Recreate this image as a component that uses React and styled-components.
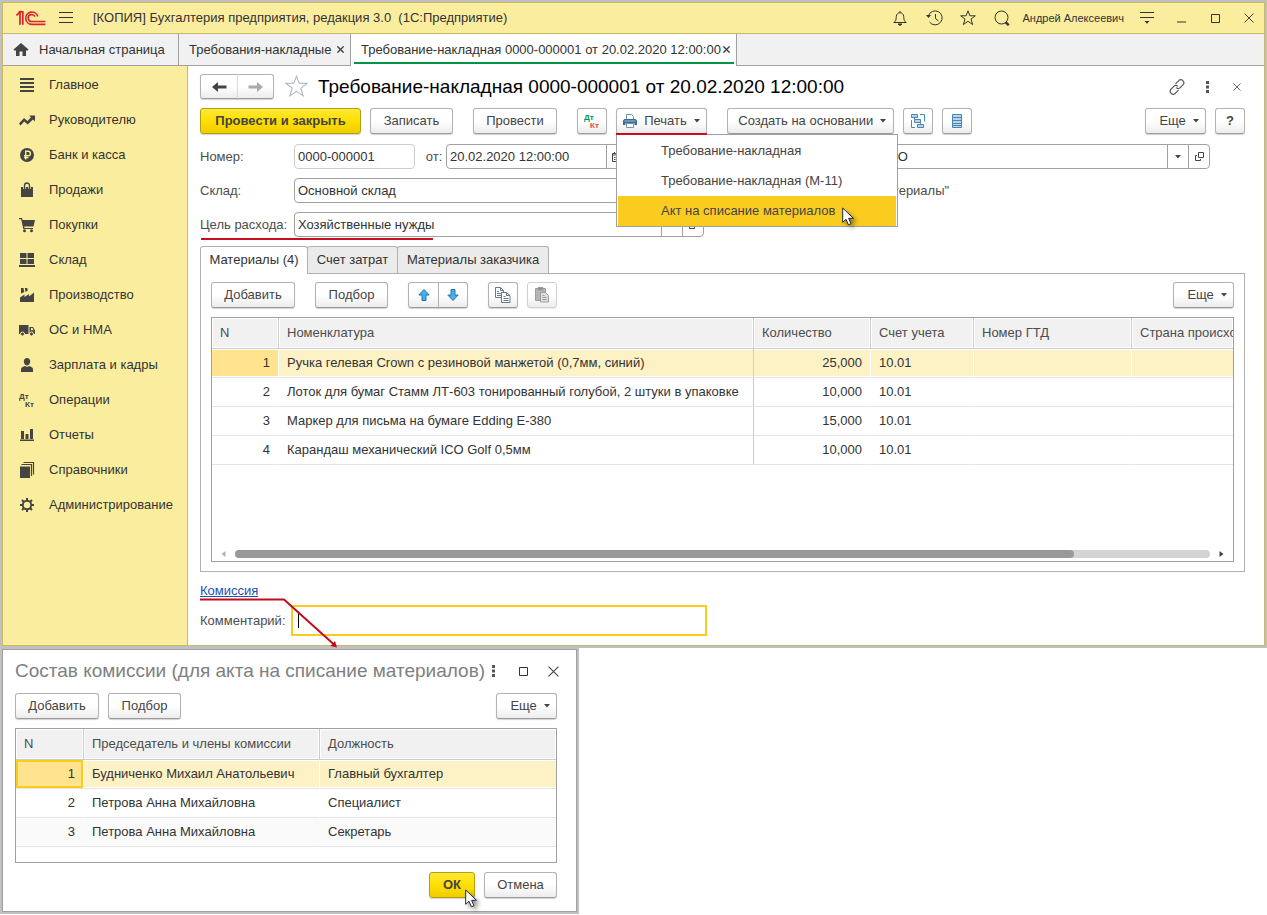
import React from 'react'
import styled, { createGlobalStyle, css } from 'styled-components'

const GlobalStyle = createGlobalStyle`
*, *::before, *::after {
  box-sizing: border-box;
}
body {
  margin: 0;
  background: #ffffff;
  color: #333333;
  font-family: 'Liberation Sans', Arial, sans-serif;
  font-size: 13px;
  line-height: 16px;
}
button, input {
  font: inherit;
  color: inherit;
}
svg {
  display: block;
  flex: none;
}
`

/* ---------- window ---------- */

const Frame = styled.div`
  position: relative;
  padding: 2px;
  background: #c0c0c0;
`
const MainWindow = styled.div`
  border: 1px solid #c9b867;
  background: #ffffff;
`
const TopBar = styled.header`
  display: flex;
  align-items: center;
  height: 31px;
  padding: 0 7px 0 13px;
  background: #fbed9e;
  border-bottom: 1px solid #c9b867;
`
const AppTitle = styled.h1`
  flex: 1;
  margin: 0 0 0 7px;
  font-size: 13px;
  font-weight: 400;
  white-space: pre;
`
const TopIcons = styled.div`
  display: flex;
  align-items: center;
  gap: 18px;
`
const UserName = styled.span`
  margin-left: 12px;
  margin-right: 15px;
  font-size: 11px;
`
const IconButton = styled.button`
  display: flex;
  align-items: center;
  justify-content: center;
  width: ${(p) => p.$w || 16}px;
  height: 20px;
  margin: 0;
  padding: 0;
  border: 0;
  background: none;
  color: #333333;
`

/* ---------- open pages ---------- */

const PageTabs = styled.nav`
  display: flex;
  height: 32px;
  background: #f1f1f1;
  border-bottom: 1px solid #a0a0a0;
`
const PageTab = styled.div`
  position: relative;
  display: flex;
  align-items: center;
  justify-content: space-between;
  width: ${(p) => p.$w}px;
  height: ${(p) => (p.$active ? 32 : 31)}px;
  padding: 0 6px 0 10px;
  border-right: 1px solid #a0a0a0;
  background: ${(p) => (p.$active ? '#ffffff' : 'transparent')};
  white-space: nowrap;

  ${(p) =>
    p.$active &&
    css`
      padding-bottom: 1px;
      &::after {
        content: '';
        position: absolute;
        left: 3px;
        right: 2px;
        bottom: 2px;
        height: 2px;
        background: #009646;
      }
    `}
`
const PageLink = styled.a`
  display: flex;
  align-items: center;
  gap: 10px;
  color: inherit;
  text-decoration: none;
`

/* ---------- sections ---------- */

const Body = styled.div`
  display: flex;
`
const Sidebar = styled.nav`
  flex: none;
  width: 185px;
  padding: 1px 0 8px;
  background: #fbed9e;
  border-right: 1px solid #c9b867;
`
const SectionLink = styled.a`
  display: flex;
  align-items: center;
  gap: 14px;
  height: 35px;
  padding-left: 16px;
  color: #333333;
  text-decoration: none;
`

/* ---------- document form ---------- */

const Content = styled.main`
  flex: 1;
  min-width: 0;
  padding: 8px 19px 9px 12px;
`
const TitleRow = styled.div`
  display: flex;
  align-items: center;
  height: 25px;
`
const DocTitle = styled.h2`
  flex: 1;
  margin: 0;
  color: #000000;
  font-size: 19px;
  line-height: 24px;
  font-weight: 400;
`
const TitleIcons = styled.div`
  display: flex;
  align-items: center;
  gap: 14px;
`
const Button = styled.button`
  display: flex;
  align-items: center;
  justify-content: center;
  gap: 7px;
  width: ${(p) => p.$w || 30}px;
  height: 26px;
  margin: 0;
  padding: 0;
  border: 1px solid #b3b3b3;
  border-bottom-color: #9c9c9c;
  border-radius: 3px;
  background: linear-gradient(#ffffff 50%, #ececec);
  box-shadow: 0 1px 1px rgba(0, 0, 0, 0.18);
  color: #444444;
  white-space: nowrap;

  &:disabled {
    border-color: #d0d0d0;
    box-shadow: 0 1px 1px rgba(0, 0, 0, 0.08);
  }

  ${(p) =>
    p.$primary &&
    css`
      border-color: #b39f12;
      background: linear-gradient(#ffe838, #ffdf00 50%, #efcd00);
      color: #444444;
      font-weight: 700;
    `}
`
const ButtonPair = styled.div`
  display: flex;

  ${Button} {
    height: ${(p) => p.$h || 26}px;
  }
  ${Button}:first-child {
    border-top-right-radius: 0;
    border-bottom-right-radius: 0;
  }
  ${Button}:last-child {
    margin-left: -1px;
    border-left-color: ${(p) => p.$divider || '#b3b3b3'};
    border-top-left-radius: 0;
    border-bottom-left-radius: 0;
  }
`
const Commands = styled.div`
  display: flex;
  gap: 20px;
  margin-top: ${(p) => p.$top || 0}px;
`
const Group = styled.div`
  display: flex;
  gap: 9px;
  margin-left: ${(p) => (p.$end ? 'auto' : 0)};
`
const MenuAnchor = styled.div`
  position: relative;
`
const MenuList = styled.div`
  position: absolute;
  z-index: 2;
  top: 26px;
  left: 0;
  width: 282px;
  padding: 1px 1px 0;
  border: 1px solid #a0a0a0;
  background: #ffffff;
`
const MenuItem = styled.button`
  display: block;
  width: 100%;
  height: 30px;
  padding: 0 0 0 43px;
  border: 0;
  background: ${(p) => (p.$active ? '#facc20' : '#ffffff')};
  color: #444444;
  text-align: left;
`
const RedLine = styled.span`
  position: absolute;
  z-index: 3;
  left: ${(p) => p.$left || 0}px;
  bottom: ${(p) => p.$bottom}px;
  width: ${(p) => p.$w}px;
  height: 2px;
  background: #c8101c;
`
const Cursor = styled.svg`
  position: absolute;
  z-index: 4;
  left: ${(p) => p.$left}px;
  top: ${(p) => p.$top}px;
  filter: drop-shadow(3px 3px 2px rgba(0, 0, 0, 0.4));
`

const Fields = styled.div`
  display: grid;
  grid-template-columns: 504px 1fr;
  column-gap: 14px;
  row-gap: 9px;
  margin: 10px 35px 0 0;
`
const Field = styled.div`
  position: relative;
  display: flex;
  align-items: center;
  height: 25px;
`
const Label = styled.label`
  flex: none;
  width: ${(p) => (p.$w ? `${p.$w}px` : 'auto')};
  color: #4d4d4d;
  white-space: nowrap;
`
const InputBox = styled.div`
  display: flex;
  flex: ${(p) => (p.$w ? 'none' : 1)};
  width: ${(p) => (p.$w ? `${p.$w}px` : 'auto')};
  min-width: 0;
  height: 25px;
  border: 1px solid ${(p) => (p.$soft ? '#cccccc' : '#a0a0a0')};
  border-radius: 4px;
  background: #ffffff;
`
const Input = styled.input`
  flex: 1;
  width: 0;
  min-width: 0;
  padding: 0 3px;
  border: 0;
  outline: 0;
  background: none;
`
const InputButton = styled.button`
  display: flex;
  align-items: center;
  justify-content: center;
  width: 21px;
  padding: 0;
  border: 0;
  border-left: 1px solid #a0a0a0;
  background: none;
  color: #444444;
`
const Note = styled.span`
  color: #4d4d4d;
  white-space: nowrap;
`

/* ---------- tabular part ---------- */

const FormTabs = styled.div`
  display: flex;
  margin-top: 9px;
`
const FormTab = styled.button`
  width: ${(p) => p.$w}px;
  height: 27px;
  margin-right: -1px;
  padding: 0;
  border: 1px solid #b0b0b0;
  border-bottom: 0;
  border-radius: 3px 3px 0 0;
  background: #ebebeb;

  ${(p) =>
    p.$active &&
    css`
      z-index: 1;
      height: 28px;
      margin-bottom: -1px;
      padding-bottom: 1px;
      background: #ffffff;
    `}
`
const Panel = styled.section`
  padding: 8px 10px 9px;
  border: 1px solid #b0b0b0;
`
const TableBox = styled.div`
  display: flex;
  flex-direction: column;
  justify-content: space-between;
  min-height: ${(p) => p.$h}px;
  margin-top: 9px;
  border: 1px solid #a0a0a0;
  overflow: hidden;
`
const Table = styled.table`
  width: 100%;
  table-layout: fixed;
  border-spacing: 0;
`
const Th = styled.th`
  height: 31px;
  padding: 0 0 0 8px;
  border-right: 1px solid #cccccc;
  border-bottom: 1px solid #cccccc;
  background: #f1f1f1;
  box-shadow: inset 0 0 0 1px #ffffff;
  color: #4d4d4d;
  font-weight: 400;
  text-align: left;
  white-space: nowrap;
  overflow: hidden;

  &:last-child {
    border-right: 0;
  }
`
const Td = styled.td`
  height: 29px;
  padding: 0 8px;
  border-right: 1px solid ${(p) => (p.$line ? '#cccccc' : 'transparent')};
  border-bottom: 1px solid #e4e4e4;
  text-align: ${(p) => (p.$num ? 'right' : 'left')};
  white-space: nowrap;
  background-clip: padding-box;

  &:last-child {
    border-right: 0;
  }
`
const Row = styled.tr`
  ${(p) =>
    p.$even &&
    css`
      background: #fafafa;
    `}
  ${(p) =>
    p.$selected &&
    css`
      ${Td} {
        background-color: #fdf1c6;
        box-shadow: inset 0 1px 0 #ffffff, inset 0 -1px 0 #ffffff;
      }
      ${Td}:first-child {
        background-color: #ffe38d;
        ${p.$focus && 'box-shadow: inset 0 0 0 2px #facc20;'}
      }
    `}
`
const ScrollRow = styled.div`
  display: flex;
  align-items: center;
  gap: 9px;
  height: 14px;
  padding: 0 9px;
`
const ScrollTrack = styled.div`
  flex: 1;
  height: 8px;
  border-radius: 4px;
  background: #d4d4d4;
`
const ScrollThumb = styled.div`
  width: 86%;
  height: 8px;
  border-radius: 4px;
  background: #999999;
`

/* ---------- footer of the form ---------- */

const Footer = styled.div`
  position: relative;
  padding-top: 11px;
`
const CommissionLink = styled.a`
  display: block;
  width: fit-content;
  color: #1a50b8;
`
const CommentRow = styled.div`
  display: flex;
  align-items: center;
  margin-top: 6px;
`
const CommentBox = styled.div`
  position: relative;
  flex: 0 1 416px;

  /* text caret */
  &::after {
    content: '';
    position: absolute;
    left: 7px;
    top: 8px;
    width: 1px;
    height: 15px;
    background: #000000;
  }
`
const CommentInput = styled.input`
  display: block;
  width: 100%;
  height: 31px;
  padding: 0 5px;
  border: 2px solid #facc20;
  outline: 0;
  caret-color: transparent;
`
const Arrow = styled.svg`
  position: absolute;
  z-index: 3;
  left: 0;
  top: 26px;
  pointer-events: none;
`

/* ---------- commission dialog ---------- */

const DialogFrame = styled(Frame)`
  width: 579px;
  padding: 1px 2px 2px;
`
const Dialog = styled.section`
  padding: 8px 19px 13px 12px;
  border: 1px solid #a0a0a0;
  background: #ffffff;
`
const DialogHead = styled.div`
  display: flex;
  align-items: center;
  height: 26px;
`
const DialogTitle = styled.h2`
  flex: 1;
  margin: 0;
  color: #808080;
  font-size: 19px;
  line-height: 24px;
  font-weight: 400;
  white-space: nowrap;
`
const DialogActions = styled.div`
  display: flex;
  justify-content: flex-end;
  gap: 9px;
  margin-top: 9px;
`

/* ---------- icons ---------- */

const Logo = () => (
  <svg width="30" height="16" viewBox="0 0 30 16" fill="none" stroke="#d8232a" strokeWidth="1.6">
    <path d="M0.4 5.4 4 2.2v12.6M2.6 1.9h4.2v12.9" strokeWidth="1.7" />
    <path d="M21.8 6.4A6.2 6.2 0 1 0 15.8 14.4H29.4" />
    <path d="M18.9 6.6A3.5 3.5 0 1 0 15.8 11.5H29.4" />
  </svg>
)

const Burger = () => (
  <svg width="14" height="12" viewBox="0 0 14 12" fill="#333">
    <path d="M0 0h14v1H0zM0 5h14v1H0zM0 10h14v1H0z" />
  </svg>
)

const Bell = () => (
  <svg width="16" height="16" viewBox="0 0 16 16" fill="none" stroke="#333">
    <path d="M1.5 12.5h13M2.5 12C4.5 10.5 4 8 4.3 6.2 4.7 4 6 2.7 8 2.7S11.3 4 11.7 6.2C12 8 11.5 10.5 13.5 12M8 1v1.5" />
    <path d="M6 14h4l-2 1.500z" fill="#333" />
  </svg>
)

const HistoryIcon = () => (
  <svg width="17" height="16" viewBox="0 0 17 16" fill="none" stroke="#333">
    <path d="M2.4 6A7 7 0 1 1 3.5 12M9.5 4v4.5l3 2.500" />
    <path d="M0 5h5L2.500 8z" fill="#333" stroke="none" />
  </svg>
)

const StarIcon = ({ size = 16, color = '#333', width = 1 }) => (
  <svg width={size} height={size} viewBox="0 0 16 16" fill="none" stroke={color} strokeWidth={width}>
    <path d="M8 .8l1.9 5h5.4l-4.3 3.3 1.6 5.4L8 11.300l-4.600 3.200L5 9.100.7 5.800h5.400z" />
  </svg>
)

const SearchIcon = () => (
  <svg width="16" height="16" viewBox="0 0 16 16" fill="none" stroke="#333">
    <circle cx="7.5" cy="7.5" r="6.5" />
    <path d="M11.5 12.2l3.3 3" strokeWidth="2.4" />
  </svg>
)

const SettingsLines = () => (
  <svg width="14" height="12" viewBox="0 0 14 12" fill="#333">
    <path d="M0 0h14v1H0zM0 5h14v1H0zM4.5 9h5L7 11.8z" />
  </svg>
)

const MinIcon = () => (
  <svg width="9" height="10" viewBox="0 0 9 10" fill="#333">
    <path d="M0 8.5h9v1H0z" />
  </svg>
)

const MaxIcon = () => (
  <svg width="9" height="9" viewBox="0 0 9 9" fill="none" stroke="#333">
    <path d="M.5.5h8v8h-8z" />
  </svg>
)

const CloseIcon = ({ size = 10, width = 1 }) => (
  <svg width={size} height={size} viewBox="0 0 10 10" fill="none" stroke="#444" strokeWidth={width}>
    <path d="M.5.5l9 9M9.5.5l-9 9" />
  </svg>
)

const HomeIcon = () => (
  <svg width="16" height="13" viewBox="0 0 16 13" fill="#444">
    <path d="M8 0l7.5 6.5-.8.9H13V13H9.5V8.5h-3V13H3V7.400H1.300L.5 6.500z" />
  </svg>
)

const ChainIcon = () => (
  <svg width="16" height="16" viewBox="0 0 16 16" fill="none" stroke="#555" strokeWidth="1.2">
    <path d="M6.5 4.8l3-3a2.7 2.7 0 0 1 4.5 0 3 3 0 0 1 .2 3.900l-3 3a2.800 2.800 0 0 1-4 0M9.500 11.200l-3 3a2.700 2.700 0 0 1-4.500 0 3 3 0 0 1-.2-3.900l3-3a2.800 2.800 0 0 1 4 0" />
  </svg>
)

const DotsIcon = () => (
  <svg width="3" height="12" viewBox="0 0 3 12" fill="#555">
    <path d="M0 0h3v3H0zM0 4.500h3v3H0zM0 9h3v3H0z" />
  </svg>
)

const ArrowIcon = ({ back }) => (
  <svg width="15" height="12" viewBox="0 0 15 12" fill={back ? '#444' : '#aaa'}>
    <path d={back ? 'M0 6l6-5v3.500h8.500v3H6V11z' : 'M15 6L9 1v3.500H.5v3H9V11z'} />
  </svg>
)

const MoveIcon = ({ down }) => (
  <svg width="12" height="12" viewBox="0 0 12 12" fill="#3fb0f0" stroke="#2a72a8">
    <path d={down ? 'M6 11.500L.8 6H4V.5h4V6h3.200z' : 'M6 .5L.8 6H4v5.500h4V6h3.200z'} />
  </svg>
)

const Caret = () => (
  <svg width="6" height="4" viewBox="0 0 6 4" fill="#444">
    <path d="M0 0h6L3 3.500z" />
  </svg>
)

const OpenIcon = () => (
  <svg width="9" height="9" viewBox="0 0 9 9" fill="none" stroke="#444">
    <path d="M3.500.5h5v5h-5zM2 3.500H.5v5h5V7" />
  </svg>
)

const CalendarIcon = () => (
  <svg width="10" height="10" viewBox="0 0 10 10" fill="none" stroke="#444">
    <path d="M.5 1.500h9v8h-9zM.5 3h9M2.500 0v2M7.500 0v2M2 5.500h1.500M2 7.500h1.500M5 5.500h1.500" />
  </svg>
)

const DtKt = ({ dt = '#444', kt = '#444' }) => (
  <svg width="16" height="16" viewBox="0 0 16 16" fontFamily="Liberation Sans" fontWeight="700" fontSize="8">
    <text x="0" y="7" fill={dt}>Дт</text>
    <text x="6" y="15" fill={kt}>Кт</text>
  </svg>
)

const PrinterIcon = () => (
  <svg width="14" height="14" viewBox="0 0 14 14">
    <path d="M3.500 6V.5h5l2 2V6" fill="#fff" stroke="#7a8fa3" />
    <path d="M1.500 5h11L14 6.500V11h-2.500V9h-9v2H0V6.500z" fill="#386b9c" />
    <path d="M1.500 7h11" stroke="#9cc0e0" />
    <path d="M3.500 9.500h7v4h-7z" fill="#fff" stroke="#7a8fa3" />
  </svg>
)

const StructureIcon = () => (
  <svg width="16" height="16" viewBox="0 0 16 16" fill="none" stroke="#4b86b4">
    <path d="M1.500 1.500h6v3h-6zM4.500 6.500h6v3h-6zM7.500 11.500h6v3h-6z" fill="#b9d3e8" />
    <path d="M10 1.500h4.500v7M1.500 7v7.500H5M4.500 4.500v2M10.500 9.500v2" />
  </svg>
)

const RegisterIcon = () => (
  <svg width="10" height="14" viewBox="0 0 10 14" fill="#b9d3e8" stroke="#4b86b4">
    <path d="M.5.5h9v13h-9zM.5 3.500h9M.5 6.500h9M.5 9.500h9M.5 11.500h9" />
  </svg>
)

const CopyIcon = () => (
  <svg width="16" height="16" viewBox="0 0 16 16" fill="#fff" stroke="#66788c">
    <path d="M.5.5h5l3 3v7h-8zM5.500.5v3h3M2 4.500h2M2 6.500h4M2 8.500h4" />
    <path d="M6.500 5.500h5l3.500 3v7H6.500zM11.500 5.500v3H15M8.500 9.500h2M8.500 11.500h5M8.500 13.500h5" />
  </svg>
)

const PasteIcon = () => (
  <svg width="16" height="16" viewBox="0 0 16 16" fill="#b5b5b5" stroke="#9d9d9d">
    <path d="M1.500 1.500h10v12h-10z" />
    <path d="M4 .5h5v2.500H4z" fill="#8f8f8f" />
    <path d="M6.500 5.500h5l3 3v6.500h-8zM8.500 8.500h2M8.500 10.500h4M8.500 12.500h4" fill="#dedede" />
  </svg>
)

const Pointer = ({ left, top }) => (
  <Cursor $left={left} $top={top} width="13" height="19" viewBox="0 0 13 19" fill="#fff" stroke="#1c2833">
    <path d="M.7 1v14.300l3.300-3 2.400 5.500 2.600-1.100-2.400-5.400h4.800z" />
  </Cursor>
)

const sectionIcons = {
  main: <path d="M1 1h14v2H1zM1 5h14v2H1zM1 9h14v2H1zM1 13h14v2H1z" />,
  chart: <path d="M0 11.500l5-5.500 3.500 3L12 5.300 10 3.500h6v6l-2-2-5.300 5L5.200 9.500 1.500 13.500z" />,
  ruble: (
    <>
      <circle cx="8" cy="8" r="7" />
      <path d="M6.700 12.500V4.200h2.500a2.200 2.200 0 0 1 0 4.400H5M5 10.500h4.500" fill="none" stroke="#fbed9e" strokeWidth="1.4" />
    </>
  ),
  bag: (
    <>
      <path d="M2 5h12v10H2z" />
      <path d="M5.500 7V3.500a2.500 2.500 0 0 1 5 0V7" fill="none" stroke="#fbed9e" strokeWidth="2.6" />
      <path d="M5.500 7V3.500a2.500 2.500 0 0 1 5 0V7" fill="none" stroke="#444" strokeWidth="1.3" />
    </>
  ),
  cart: (
    <>
      <path d="M0 1h3l.7 2H16l-1.500 6.500H5.200l.3 1.500H14v1H4.300L2.200 2.300H0z" />
      <circle cx="5.5" cy="13.7" r="1.5" />
      <circle cx="12.5" cy="13.7" r="1.5" />
    </>
  ),
  stock: <path d="M1 1h6.500v5H1zM8.500 1H15v5H8.500zM1 7h6.500v5H1zM8.500 7H15v5H8.500zM0 13h16v2H0z" />,
  factory: <path d="M1 15V10.500L5.500 7.500v2.500l4.500-3v2.500l5-4V15zM2 1h2.500l.8 4L2 6.500zM5.800 1h2.500l.5 2.500L6.500 5z" />,
  truck: (
    <>
      <path d="M0 3h9.500v9H0zM10.500 5H14l2 3.500V12h-5.500z" />
      <circle cx="3.5" cy="12" r="2" stroke="#fbed9e" />
      <circle cx="12.5" cy="12" r="2" stroke="#fbed9e" />
      <path d="M12 6h1.500l1 2.200H12z" fill="#fbed9e" />
    </>
  ),
  person: <path d="M8 1a3.200 3.200 0 0 1 3.200 3.500C11 7 9.500 8.500 8 8.500S5 7 4.800 4.500A3.200 3.200 0 0 1 8 1zM2 15v-3c0-1.500 2-2.500 4-3l2 1 2-1c2 .5 4 1.500 4 3v3z" />,
  report: <path d="M2 4h3v8H2zM6.500 7h3v5h-3zM11 2h3v10h-3zM1 12.500h14v1.500H1z" />,
  books: (
    <>
      <path d="M1 4.500h10V16H1z" />
      <path d="M2.500 2.500h10V14M4.500.5h10V12.500" fill="none" stroke="#444" strokeWidth="1.2" />
    </>
  ),
  gear: (
    <>
      <circle cx="8" cy="8" r="4.2" fill="none" stroke="#444" strokeWidth="1.9" />
      <path
        d="M8 1v3M8 12v3M1 8h3M12 8h3M3 3l2.200 2.200M10.800 10.800L13 13M13 3l-2.200 2.200M5.200 10.800L3 13"
        stroke="#444"
        strokeWidth="2"
      />
    </>
  )
}

/* ---------- data ---------- */

const sections = [
  ['main', 'Главное'],
  ['chart', 'Руководителю'],
  ['ruble', 'Банк и касса'],
  ['bag', 'Продажи'],
  ['cart', 'Покупки'],
  ['stock', 'Склад'],
  ['factory', 'Производство'],
  ['truck', 'ОС и НМА'],
  ['person', 'Зарплата и кадры'],
  ['dtkt', 'Операции'],
  ['report', 'Отчеты'],
  ['books', 'Справочники'],
  ['gear', 'Администрирование']
]

const materials = [
  ['Ручка гелевая Crown с резиновой манжетой (0,7мм, синий)', '25,000'],
  ['Лоток для бумаг Стамм ЛТ-603 тонированный голубой, 2 штуки в упаковке', '10,000'],
  ['Маркер для письма на бумаге Edding E-380', '15,000'],
  ['Карандаш механический ICO Golf 0,5мм', '10,000']
]

const members = [
  ['Будниченко Михаил Анатольевич', 'Главный бухгалтер'],
  ['Петрова Анна Михайловна', 'Специалист'],
  ['Петрова Анна Михайловна', 'Секретарь']
]

const MoreButton = () => (
  <Button $w={61}>
    &nbsp;&nbsp;Еще <Caret />
  </Button>
)

const MaterialsTable = () => (
  <TableBox $h={245}>
    <Table>
      <colgroup>
        <col style={{ width: 67 }} />
        <col />
        <col style={{ width: 117 }} />
        <col style={{ width: 103 }} />
        <col style={{ width: 158 }} />
        <col style={{ width: 101 }} />
      </colgroup>
      <thead>
        <tr>
          <Th>N</Th>
          <Th>Номенклатура</Th>
          <Th>Количество</Th>
          <Th>Счет учета</Th>
          <Th>Номер ГТД</Th>
          <Th>Страна происхождения</Th>
        </tr>
      </thead>
      <tbody>
        {materials.map(([name, count], i) => (
          <Row key={name} $selected={i === 0}>
            <Td $num>{i + 1}</Td>
            <Td $line>{name}</Td>
            <Td $num>{count}</Td>
            <Td>10.01</Td>
            <Td />
            <Td />
          </Row>
        ))}
      </tbody>
    </Table>
    <ScrollRow>
      <svg width="5" height="6" viewBox="0 0 5 6" fill="#b0b0b0">
        <path d="M4.500 0v6L.5 3z" />
      </svg>
      <ScrollTrack>
        <ScrollThumb />
      </ScrollTrack>
      <svg width="5" height="6" viewBox="0 0 5 6" fill="#444">
        <path d="M.5 0v6l4-3z" />
      </svg>
    </ScrollRow>
  </TableBox>
)

const CommissionDialog = () => (
  <DialogFrame>
    <Dialog aria-label="Состав комиссии">
      <DialogHead>
        <DialogTitle>Состав комиссии (для акта на списание материалов)</DialogTitle>
        <TitleIcons>
          <IconButton aria-label="Меню"><DotsIcon /></IconButton>
          <IconButton aria-label="Развернуть"><MaxIcon /></IconButton>
          <IconButton aria-label="Закрыть"><CloseIcon size={11} /></IconButton>
        </TitleIcons>
      </DialogHead>
      <Commands $top={9}>
        <Group>
          <Button $w={84}>Добавить</Button>
          <Button $w={73}>Подбор</Button>
        </Group>
        <Group $end>
          <MoreButton />
        </Group>
      </Commands>
      <TableBox $h={135}>
        <Table>
          <colgroup>
            <col style={{ width: 68 }} />
            <col style={{ width: 236 }} />
            <col />
          </colgroup>
          <thead>
            <tr>
              <Th>N</Th>
              <Th>Председатель и члены комиссии</Th>
              <Th>Должность</Th>
            </tr>
          </thead>
          <tbody>
            {members.map(([name, post], i) => (
              <Row key={i} $selected={i === 0} $focus $even={i === 2}>
                <Td $num>{i + 1}</Td>
                <Td>{name}</Td>
                <Td>{post}</Td>
              </Row>
            ))}
          </tbody>
        </Table>
      </TableBox>
      <DialogActions>
        <MenuAnchor>
          <Button $w={46} $primary>ОК</Button>
          <Pointer left={36} top={17} />
        </MenuAnchor>
        <Button $w={73}>Отмена</Button>
      </DialogActions>
    </Dialog>
  </DialogFrame>
)

const App = () => {
  return (
    <>
      <GlobalStyle />
      <Frame>
        <MainWindow>
          <TopBar>
            <Logo />
            <IconButton $w={40} aria-label="Главное меню"><Burger /></IconButton>
            <AppTitle>{'[КОПИЯ] Бухгалтерия предприятия, редакция 3.0  (1С:Предприятие)'}</AppTitle>
            <TopIcons>
              <IconButton aria-label="Оповещения"><Bell /></IconButton>
              <IconButton aria-label="История"><HistoryIcon /></IconButton>
              <IconButton aria-label="Избранное"><StarIcon /></IconButton>
              <IconButton aria-label="Поиск"><SearchIcon /></IconButton>
            </TopIcons>
            <UserName>Андрей Алексеевич</UserName>
            <TopIcons>
              <IconButton aria-label="Настройки"><SettingsLines /></IconButton>
              <IconButton aria-label="Свернуть"><MinIcon /></IconButton>
              <IconButton aria-label="Развернуть"><MaxIcon /></IconButton>
              <IconButton aria-label="Закрыть"><CloseIcon /></IconButton>
            </TopIcons>
          </TopBar>

          <PageTabs>
            <PageTab $w={176}>
              <PageLink href="#home"><HomeIcon />Начальная страница</PageLink>
            </PageTab>
            <PageTab $w={172}>
              <PageLink href="#list">Требования-накладные</PageLink>
              <IconButton $w={8} aria-label="Закрыть"><CloseIcon size={7} width={2} /></IconButton>
            </PageTab>
            <PageTab $w={386} $active>
              <PageLink href="#doc">Требование-накладная 0000-000001 от 20.02.2020 12:00:00</PageLink>
              <IconButton $w={8} aria-label="Закрыть"><CloseIcon size={7} width={2} /></IconButton>
            </PageTab>
          </PageTabs>

          <Body>
            <Sidebar>
              {sections.map(([icon, title]) => (
                <SectionLink key={icon} href={`#${icon}`}>
                  {icon === 'dtkt' ? (
                    <DtKt />
                  ) : (
                    <svg width="16" height="16" viewBox="0 0 16 16" fill="#444">
                      {sectionIcons[icon]}
                    </svg>
                  )}
                  {title}
                </SectionLink>
              ))}
            </Sidebar>

            <Content>
              <TitleRow>
                <ButtonPair $h={25} $divider="#dddddd">
                  <Button $w={38} aria-label="Назад"><ArrowIcon back /></Button>
                  <Button $w={37} aria-label="Вперед"><ArrowIcon /></Button>
                </ButtonPair>
                <IconButton $w={44} aria-label="В избранное">
                  <StarIcon size={23} color="#a8b0b8" width={0.7} />
                </IconButton>
                <DocTitle>Требование-накладная 0000-000001 от 20.02.2020 12:00:00</DocTitle>
                <TitleIcons>
                  <IconButton aria-label="Ссылка"><ChainIcon /></IconButton>
                  <IconButton aria-label="Меню"><DotsIcon /></IconButton>
                  <IconButton aria-label="Закрыть"><CloseIcon size={8} /></IconButton>
                </TitleIcons>
              </TitleRow>

              <Commands $top={9}>
                <Group>
                  <Button $w={161} $primary>Провести и закрыть</Button>
                  <Button $w={83}>Записать</Button>
                </Group>
                <Group>
                  <Button $w={84}>Провести</Button>
                </Group>
                <Group>
                  <Button aria-label="Движения документа"><DtKt dt="#009646" kt="#e04848" /></Button>
                  <MenuAnchor>
                    <Button $w={91}><PrinterIcon />Печать <Caret /></Button>
                    <RedLine $w={91} $bottom={-1} />
                    <MenuList>
                      <MenuItem>Требование-накладная</MenuItem>
                      <MenuItem>Требование-накладная (М-11)</MenuItem>
                      <MenuItem $active>Акт на списание материалов</MenuItem>
                    </MenuList>
                    <Pointer left={226} top={99} />
                  </MenuAnchor>
                </Group>
                <Group>
                  <Button $w={167}>&nbsp;Создать на основании <Caret /></Button>
                  <Button aria-label="Структура подчиненности"><StructureIcon /></Button>
                  <Button aria-label="Реестр"><RegisterIcon /></Button>
                </Group>
                <Group $end>
                  <MoreButton />
                  <Button aria-label="Справка"><b>?</b></Button>
                </Group>
              </Commands>

              <Fields>
                <Field>
                  <Label $w={94} htmlFor="number">Номер:</Label>
                  <InputBox $w={121} $soft><Input id="number" defaultValue="0000-000001" /></InputBox>
                  <Label $w={31} htmlFor="date">&nbsp;&nbsp;&nbsp;от:</Label>
                  <InputBox $w={182}>
                    <Input id="date" defaultValue="20.02.2020 12:00:00" />
                    <InputButton aria-label="Календарь"><CalendarIcon /></InputButton>
                  </InputBox>
                </Field>
                <Field>
                  <Label $w={76} htmlFor="org">Орг.:</Label>
                  <InputBox>
                    <Input id="org" defaultValue="Конфетпром ООО" />
                    <InputButton aria-label="Выбрать"><Caret /></InputButton>
                    <InputButton aria-label="Открыть"><OpenIcon /></InputButton>
                  </InputBox>
                </Field>
                <Field>
                  <Label $w={94} htmlFor="store">Склад:</Label>
                  <InputBox>
                    <Input id="store" defaultValue="Основной склад" />
                    <InputButton aria-label="Выбрать"><Caret /></InputButton>
                    <InputButton aria-label="Открыть"><OpenIcon /></InputButton>
                  </InputBox>
                </Field>
                <Field>
                  <Note>Счета учета на закладке "Материалы"</Note>
                </Field>
                <Field>
                  <Label $w={94} htmlFor="purpose">Цель расхода:</Label>
                  <InputBox>
                    <Input id="purpose" defaultValue="Хозяйственные нужды" />
                    <InputButton aria-label="Выбрать"><Caret /></InputButton>
                    <InputButton aria-label="Открыть"><OpenIcon /></InputButton>
                  </InputBox>
                  <RedLine $left={1} $w={232} $bottom={-3} />
                </Field>
              </Fields>

              <FormTabs>
                <FormTab $w={108} $active>Материалы (4)</FormTab>
                <FormTab $w={91}>Счет затрат</FormTab>
                <FormTab $w={152}>Материалы заказчика</FormTab>
              </FormTabs>
              <Panel>
                <Commands>
                  <Button $w={84}>Добавить</Button>
                  <Button $w={73}>Подбор</Button>
                  <ButtonPair>
                    <Button $w={31} aria-label="Вверх"><MoveIcon /></Button>
                    <Button aria-label="Вниз"><MoveIcon down /></Button>
                  </ButtonPair>
                  <Group>
                    <Button aria-label="Копировать"><CopyIcon /></Button>
                    <Button aria-label="Вставить" disabled><PasteIcon /></Button>
                  </Group>
                  <Group $end>
                    <MoreButton />
                  </Group>
                </Commands>
                <MaterialsTable />
              </Panel>

              <Footer>
                <CommissionLink href="#commission">Комиссия</CommissionLink>
                <CommentRow>
                  <Label $w={91} htmlFor="comment">Комментарий:</Label>
                  <CommentBox>
                    <CommentInput id="comment" />
                  </CommentBox>
                </CommentRow>
                <Arrow width="140" height="52" viewBox="0 0 140 52" fill="none" stroke="#c00d18" strokeWidth="2">
                  <path d="M0 1.500h84l50 45" />
                  <path d="M137 49.500l-6.500-1.500 4.500-5z" fill="#c00d18" stroke="none" />
                </Arrow>
              </Footer>
            </Content>
          </Body>
        </MainWindow>
      </Frame>
      <CommissionDialog />
    </>
  )
}

export default App
